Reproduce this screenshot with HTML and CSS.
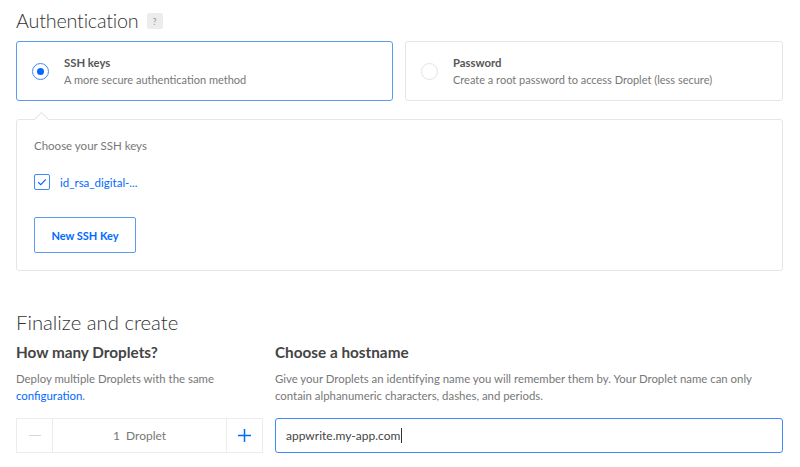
FILE: index.html
```html
<!DOCTYPE html>
<html>
<head>
<meta charset="utf-8">
<link rel="stylesheet" href="styles.css">
</head>
<body>
<div class="page">
  <div class="head-row">
    <h2 class="h2 auth">Authentication</h2>
    <span class="help">?</span>
  </div>
  <div class="options">
    <div class="option selected">
      <span class="radio on"></span>
      <div class="opt-text">
        <div class="opt-title">SSH keys</div>
        <div class="opt-sub">A more secure authentication method</div>
      </div>
    </div>
    <div class="option">
      <span class="radio"></span>
      <div class="opt-text">
        <div class="opt-title">Password</div>
        <div class="opt-sub">Create a root password to access Droplet (less secure)</div>
      </div>
    </div>
  </div>
  <div class="panel">
    <div class="panel-label">Choose your SSH keys</div>
    <div class="key-row">
      <span class="check"><svg width="10" height="8" viewBox="0 0 10 8"><path d="M1.2 4.2 L3.8 6.6 L8.8 1.4" fill="none" stroke="#0069ff" stroke-width="1.2"/></svg></span>
      <span class="key-name">id_rsa_digital-...</span>
    </div>
    <button class="btn">New SSH Key</button>
  </div>

  <h2 class="h2 finalize">Finalize and create</h2>
  <div class="cols">
    <div class="col">
      <h3 class="h3">How many Droplets?</h3>
      <p class="desc">Deploy multiple Droplets with the same <span class="link">configuration</span>.</p>
      <div class="stepper">
        <span class="step minus"><svg width="12" height="2" viewBox="0 0 12 2"><rect width="12" height="1" fill="#d6d6d6"/></svg></span>
        <span class="count">1&nbsp; Droplet</span>
        <span class="step plus"><svg width="13" height="13" viewBox="0 0 13 13"><path d="M6.5 0 V13 M0 6.5 H13" stroke="#0069ff" stroke-width="1.5"/></svg></span>
      </div>
    </div>
    <div class="col">
      <h3 class="h3">Choose a hostname</h3>
      <p class="desc">Give your Droplets an identifying name you will remember them by. Your Droplet name can only contain alphanumeric characters, dashes, and periods.</p>
      <div class="input"><span>appwrite.my-app.com</span><span class="caret"></span></div>
    </div>
  </div>
</div>
</body>
</html>
```
FILE: styles.css
```css
* { box-sizing: border-box; }
html, body { margin: 0; padding: 0; background: #fff; }
body { font-family: Lato, "Noto Sans", sans-serif; color: #444; }
.page { padding: 8px 17px 0 16px; }
.head-row { display: flex; align-items: center; gap: 8px; height: 24px; }
.h2 { margin: 0; font-size: 20.3px; font-weight: 300; color: #333; line-height: 24px; }
.auth { font-size: 19.8px; letter-spacing: -0.2px; }
.help { width: 16px; height: 16px; background: #ececec; border-radius: 2px; font-size: 9px; color: #999; display: flex; align-items: center; justify-content: center; margin-top: 2px; }
.options { display: grid; grid-template-columns: 377px 1fr; gap: 12px; margin-top: 9px; }
.option { height: 60px; border: 1px solid #e6e6e6; border-radius: 3px; display: flex; align-items: center; padding-left: 15px; }
.option.selected { border-color: #5b9bf0; }
.radio { width: 17px; height: 17px; border-radius: 50%; border: 1px solid #e3e3e3; flex: none; position: relative; }
.radio.on { border: 1.5px solid #3f8af5; }
.radio.on::after { content: ""; position: absolute; left: 50%; top: 50%; width: 7px; height: 7px; margin: -3.5px 0 0 -3.5px; border-radius: 50%; background: #0069ff; }
.opt-text { margin-left: 15px; }
.opt-title { font-size: 11.3px; font-weight: 700; color: #555; line-height: 16px; }
.opt-sub { font-size: 11px; color: #777; line-height: 17px; }
.panel { position: relative; margin-top: 18px; height: 152px; border: 1px solid #e6e6e6; border-radius: 3px; padding: 18px 17px; }
.panel::before { content: ""; position: absolute; left: 19px; top: -6px; width: 10px; height: 10px; background: #fff; border-left: 1px solid #e6e6e6; border-top: 1px solid #e6e6e6; transform: rotate(45deg); }
.panel-label { font-size: 11.5px; color: #777; line-height: 16px; }
.key-row { display: flex; align-items: center; margin-top: 20px; height: 16px; }
.check { width: 16px; height: 16px; border: 1px solid #3f8af5; border-radius: 2px; display: flex; align-items: center; justify-content: center; }
.key-name { margin-left: 10px; font-size: 11.5px; color: #0069ff; }
.btn { display: block; margin-top: 27px; width: 102px; height: 36px; border: 1px solid #5b9bf0; border-radius: 2px; background: #fff; color: #0069ff; font-family: inherit; font-size: 11px; font-weight: 700; padding: 0; }
.finalize { margin-top: 39px; }
.cols { display: grid; grid-template-columns: 247px 1fr; gap: 12px; margin-top: 8px; }
.h3 { margin: 0; font-size: 15.3px; font-weight: 700; color: #444; line-height: 20px; }
.desc { margin: 8px 0 0; font-size: 11.4px; color: #777; line-height: 17px; height: 34px; }
.link { color: #0069ff; }
.stepper { margin-top: 14px; height: 35px; border: 1px solid #ececec; display: flex; align-items: stretch; }
.step { width: 36px; display: flex; align-items: center; justify-content: center; flex: none; }
.minus { border-right: 1px solid #ececec; }
.plus { border-left: 1px solid #ececec; }
.count { flex: 1; display: flex; align-items: center; justify-content: center; font-size: 12px; color: #777; }
.input { margin-top: 14px; height: 35px; border: 1px solid #3f8af5; border-radius: 3px; display: flex; align-items: center; padding-left: 10px; font-size: 12px; color: #444; }
.caret { display: inline-block; width: 1px; height: 15px; background: #333; margin-left: 1px; }
```
